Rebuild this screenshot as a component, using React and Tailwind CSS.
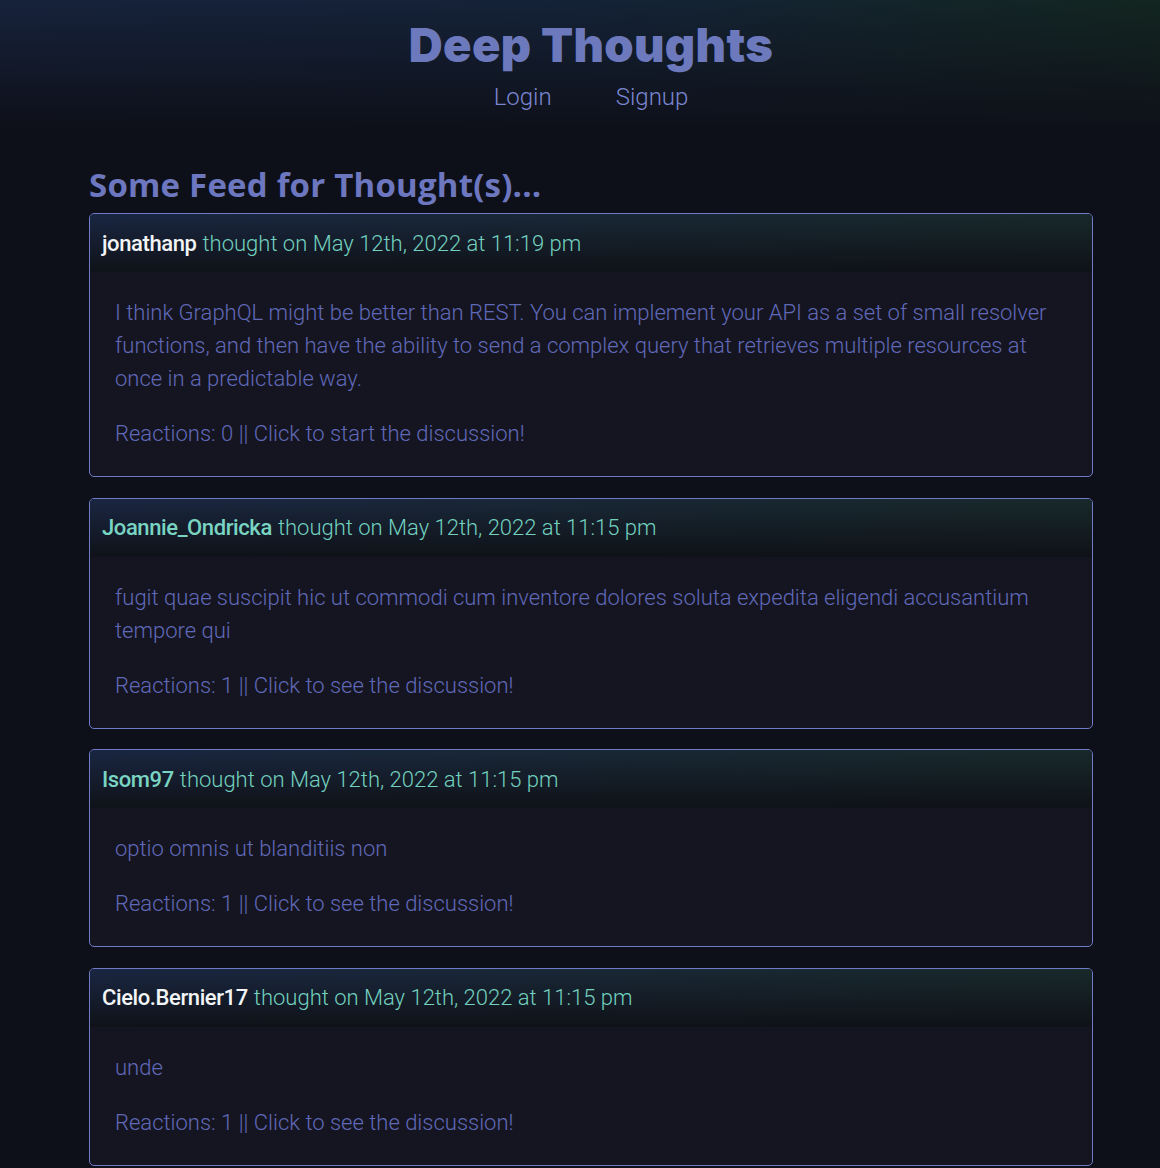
import React from 'react';

const thoughts = [
  {
    user: 'jonathanp',
    visited: false,
    date: 'May 12th, 2022 at 11:19 pm',
    text: 'I think GraphQL might be better than REST. You can implement your API as a set of small resolver functions, and then have the ability to send a complex query that retrieves multiple resources at once in a predictable way.',
    reactions: 0,
  },
  {
    user: 'Joannie_Ondricka',
    visited: true,
    date: 'May 12th, 2022 at 11:15 pm',
    text: 'fugit quae suscipit hic ut commodi cum inventore dolores soluta expedita eligendi accusantium tempore qui',
    reactions: 1,
  },
  {
    user: 'Isom97',
    visited: true,
    date: 'May 12th, 2022 at 11:15 pm',
    text: 'optio omnis ut blanditiis non',
    reactions: 1,
  },
  {
    user: 'Cielo.Bernier17',
    visited: false,
    date: 'May 12th, 2022 at 11:15 pm',
    text: 'unde',
    reactions: 1,
  },
];

const ThoughtCard = ({ thought }) => (
  <div className="rounded-[5px] border border-[#6f7bc6] bg-[#151522] overflow-hidden">
    <div className="h-[58px] flex items-center px-3 bg-[linear-gradient(to_bottom,rgba(14,16,22,0)_0%,#0f1218_100%),linear-gradient(to_right,#1a2642,#18292a)] text-[22px]">
      <span
        className={
          thought.visited
            ? 'font-medium tracking-[-0.4px] text-[#79d4c2]'
            : 'font-medium tracking-[-0.4px] text-[#f2f4f6]'
        }
      >
        {thought.user}
      </span>
      <span className="ml-[6px] font-light text-[#72d0bf]">thought on {thought.date}</span>
    </div>
    <div className="px-[25px] pt-6 pb-[26px] text-[22px] leading-[33px] font-light text-[#6069b8]">
      <p className="mb-[22px]">{thought.text}</p>
      <p>
        Reactions: {thought.reactions} || Click to{' '}
        {thought.reactions ? 'see' : 'start'} the discussion!
      </p>
    </div>
  </div>
);

const App = () => {
  return (
    <div className="min-h-screen overflow-hidden bg-[#0e1019] font-['Roboto',sans-serif]">
      <div className="w-[1182px]">
        <header className="h-[130px] flex flex-col items-center bg-[linear-gradient(to_bottom,rgba(14,16,25,0)_0%,#0e1019_100%),linear-gradient(to_right,#16223b,#142237_50%,#13261f)]">
          <h1 className="mt-[17px] text-[47px] leading-[56px] font-black tracking-[0.3px] text-[#6c79bd] font-['Inter',sans-serif]">
            Deep Thoughts
          </h1>
          <nav className="mt-[6px] flex gap-[64px] text-[24px] leading-[36px] font-light text-[#7a86d0]">
            <span>Login</span>
            <span>Signup</span>
          </nav>
        </header>
        <main className="mx-[89px] pt-[32px] pb-10">
          <h2 className="text-[33px] leading-[46px] font-bold text-[#6c77bf] mb-[5px] font-['Open_Sans',sans-serif] tracking-[0.2px]">
            Some Feed for Thought(s)...
          </h2>
          <div className="flex flex-col gap-[20.5px]">
            {thoughts.map((t) => (
              <ThoughtCard key={t.user} thought={t} />
            ))}
          </div>
        </main>
      </div>
    </div>
  );
};

export default App;
